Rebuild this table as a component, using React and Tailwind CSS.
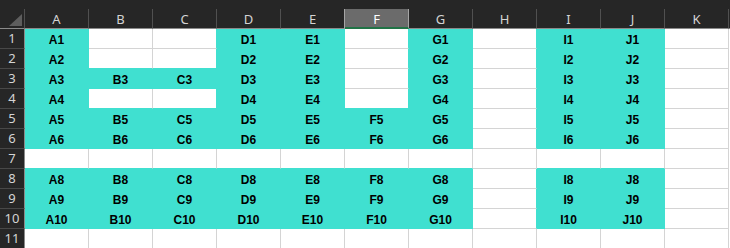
import React from 'react';

const COLS = ['A', 'B', 'C', 'D', 'E', 'F', 'G', 'H', 'I', 'J', 'K'];

// filled (turquoise) cells per row
const FILLED = {
  1: 'ADEGIJ',
  2: 'ADEGIJ',
  3: 'ABCDEGIJ',
  4: 'ADEGIJ',
  5: 'ABCDEFGIJ',
  6: 'ABCDEFGIJ',
  7: '',
  8: 'ABCDEFGIJ',
  9: 'ABCDEFGIJ',
  10: 'ABCDEFGIJ',
  11: '',
};

const isFilled = (row, col) => (FILLED[row] || '').includes(col);

const ColHeader = ({ label, selected, beforeSelected }) => (
  <div
    className={
      'box-border w-[64px] shrink-0 flex justify-center pt-[1px] leading-[18px] border-r ' +
      (selected
        ? 'bg-[#6b6b6b] text-white border-b-2 border-b-[#217346] border-r-[#a5a5a5]'
        : 'text-[#d4d4d4] border-b border-b-[#8a8a8a] ' +
          (beforeSelected ? 'border-r-[#a5a5a5]' : 'border-r-[#505050]'))
    }
  >
    {label}
  </div>
);

const Cell = ({ row, col, next }) => {
  const filled = isFilled(row, col);
  const rightWhite = !filled && !(next && isFilled(row, next));
  const belowWhite = !filled && !isFilled(row + 1, col);

  return (
    <div
      className={
        'box-border w-[64px] h-[20px] shrink-0 border-r border-b flex justify-center pt-[4px] leading-[15px] font-bold text-[12px] text-black ' +
        (filled ? 'bg-[#40e0d0] ' : 'bg-white ') +
        (rightWhite ? 'border-r-[#d4d4d4] ' : 'border-r-[#40e0d0] ') +
        (belowWhite ? 'border-b-[#d4d4d4]' : 'border-b-[#40e0d0]')
      }
      style={{ fontFamily: '"Liberation Sans", Arial, sans-serif' }}
    >
      {filled ? `${col}${row}` : ''}
    </div>
  );
};

export default function App() {
  const rows = Array.from({ length: 11 }, (_, i) => i + 1);

  return (
    <div
      className="w-[730px] h-[248px] overflow-hidden bg-white text-[13px]"
      style={{ fontFamily: '"Noto Sans", "Open Sans", sans-serif' }}
    >
      {/* column headers */}
      <div className="bg-[#262626] pt-[9px]">
        <div className="flex h-[20px]">
          <div className="box-border w-[25px] shrink-0 border-r border-r-[#505050] border-b border-b-[#8a8a8a] flex items-end justify-end pr-[2px] pb-[2px]">
            <svg width="13" height="12" viewBox="0 0 13 12">
              <polygon points="13,0 13,12 0,12" fill="#5e5e5e" />
            </svg>
          </div>
          {COLS.map((c, i) => (
            <ColHeader
              key={c}
              label={c}
              selected={c === 'F'}
              beforeSelected={COLS[i + 1] === 'F'}
            />
          ))}
          <div className="flex-1 border-b border-b-[#8a8a8a]" />
        </div>
      </div>

      {/* rows */}
      {rows.map(r => (
        <div key={r} className="flex h-[20px]">
          <div className="box-border w-[25px] shrink-0 bg-[#262626] border-r border-r-[#8a8a8a] border-b border-b-[#484848] flex justify-center leading-[19px] text-[#d4d4d4]">
            {r}
          </div>
          {COLS.map((c, i) => (
            <Cell key={c} row={r} col={c} next={COLS[i + 1]} />
          ))}
        </div>
      ))}
    </div>
  );
}
